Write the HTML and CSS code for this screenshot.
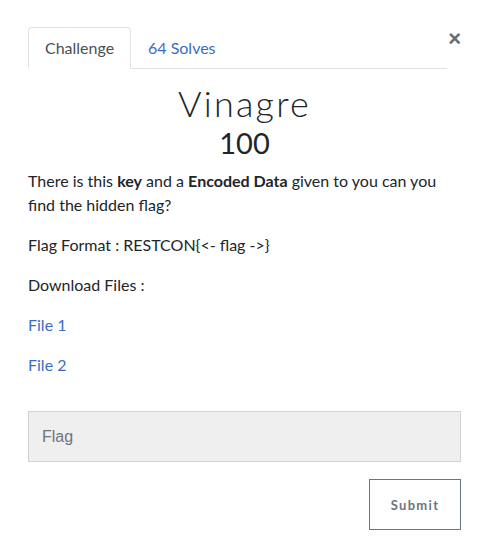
FILE: index.html
```html
<!DOCTYPE html>
<html>
<head>
<meta charset="utf-8">
<link rel="stylesheet" href="styles.css">
</head>
<body>
<div class="modal">
  <div class="tabs-row">
    <ul class="tabs">
      <li class="tab active">Challenge</li>
      <li class="tab link">64 Solves</li>
    </ul>
    <span class="close">×</span>
  </div>
  <h2 class="title">Vinagre</h2>
  <h3 class="value">100</h3>
  <div class="desc">
    <p>There is this <b>key</b> and a <b>Encoded Data</b> given to you can you find the hidden flag?</p>
    <p>Flag Format : RESTCON{&lt;- flag -&gt;}</p>
    <p>Download Files :</p>
    <p><a href="#">File 1</a></p>
    <p><a href="#">File 2</a></p>
  </div>
  <div class="flag-input">Flag</div>
  <div class="actions">
    <button class="submit">Submit</button>
  </div>
</div>
</body>
</html>
```

FILE: styles.css
```css
html, body {
  margin: 0;
  padding: 0;
  background: #fff;
}
body {
  font-family: Lato, "Noto Sans", sans-serif;
  color: #212529;
  font-size: 16px;
  line-height: 1.5;
}
.modal {
  width: 433px;
  padding: 27px 0 0 28px;
}
.tabs-row {
  display: flex;
  align-items: flex-start;
}
.tabs {
  list-style: none;
  margin: 0;
  padding: 0;
  display: flex;
  width: 420px;
  border-bottom: 1px solid #dee2e6;
}
.tab {
  font-size: 16px;
  line-height: 22px;
  padding: 9px 16px 9px 16px;
  border: 1px solid transparent;
  border-top-left-radius: 4px;
  border-top-right-radius: 4px;
  margin-bottom: -1px;
}
.tab.active {
  color: #495057;
  border-color: #dee2e6 #dee2e6 #fff;
  width: 69px;
}
.tab.link {
  color: #3a6dc4;
}
.close {
  font-family: "Liberation Sans", Arial, sans-serif;
  font-weight: bold;
  font-size: 22px;
  line-height: 20px;
  color: #6b6b6b;
  margin: 2px 0 0 1px;
}
.title {
  margin: 13px 0 0;
  text-align: center;
  font-family: Lato, sans-serif;
  font-weight: 300;
  font-size: 36px;
  letter-spacing: 2.2px;
  line-height: 42px;
  color: #212529;
}
.value {
  margin: 1px 0 0;
  text-align: center;
  font-weight: 400;
  font-size: 29px;
  line-height: 36px;
  color: #212529;
}
.desc {
  margin-top: 8px;
  font-size: 16px;
  line-height: 24px;
}
.desc p {
  margin: 0 0 16px;
}
.desc b {
  font-weight: bold;
}
.desc a {
  color: #3a6dc4;
  text-decoration: none;
}
.flag-input {
  margin-top: 34px;
  box-sizing: border-box;
  height: 51px;
  background: #efefef;
  border: 1px solid #cfd4da;
  font-family: "Liberation Sans", Arial, sans-serif;
  font-size: 16px;
  line-height: 49px;
  padding-left: 13px;
  color: #6c757d;
}
.actions {
  display: flex;
  justify-content: flex-end;
  margin-top: 17px;
}
.submit {
  width: 92px;
  height: 51px;
  box-sizing: border-box;
  background: #fff;
  border: 1px solid #6c757d;
  font-family: Lato, sans-serif;
  font-weight: bold;
  font-size: 13px;
  letter-spacing: 1.3px;
  color: #6c757d;
  padding: 0;
}
```
